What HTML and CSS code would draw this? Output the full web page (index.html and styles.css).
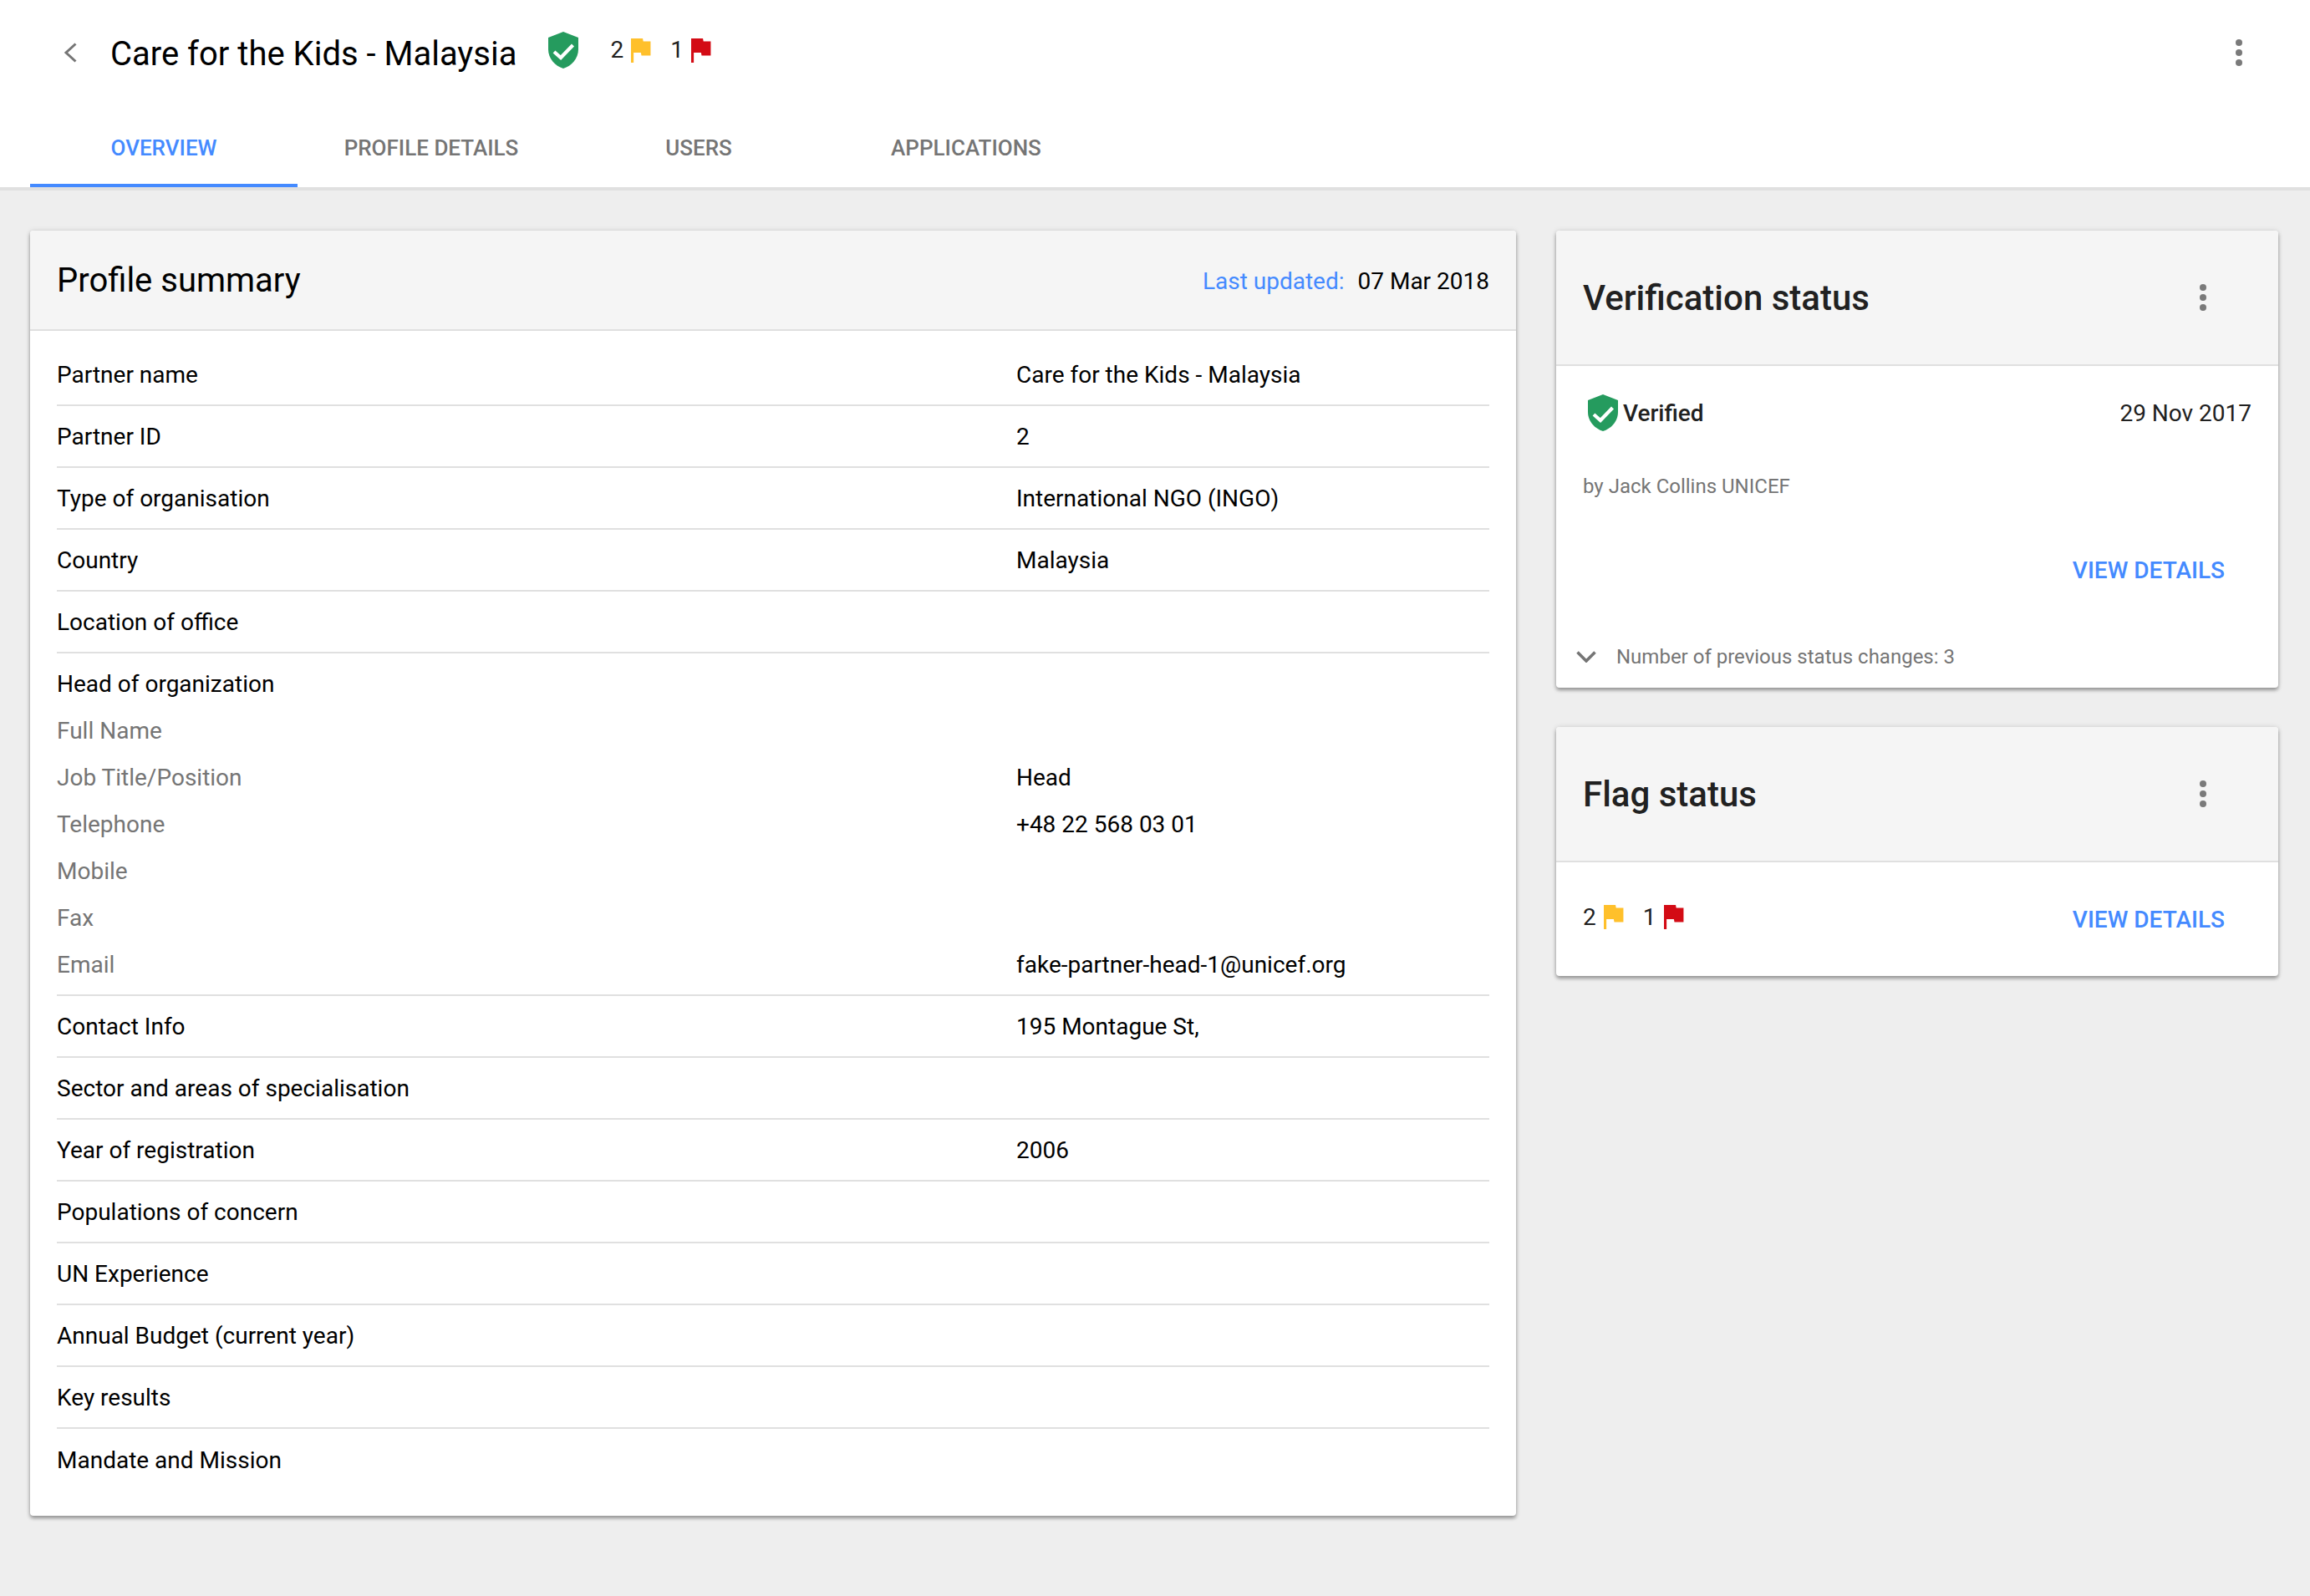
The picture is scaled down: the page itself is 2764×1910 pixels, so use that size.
FILE: index.html
```html
<!DOCTYPE html>
<html lang="en">
  <head>
    <meta charset="UTF-8" />
    <title>Care for the Kids - Malaysia</title>
    <link rel="stylesheet" href="styles.css">
  </head>
  <body>
    <svg class="defs" width="0" height="0">
      <symbol id="shield" viewBox="0 0 36 44">
        <path d="M18 0L36 7V21C36 32 28 41 18 44C8 41 0 32 0 21V7Z" fill="#259b5e"/>
        <path d="M7 24L15 31L29.500 16" fill="none" stroke="#fff" stroke-width="4.200"/>
      </symbol>
      <symbol id="flag" viewBox="5 4 16 17" preserveAspectRatio="none">
        <path d="M14.400 6L14 4H5v17h2v-7h5.600l.4 2h7V6z"/>
      </symbol>
      <symbol id="kebab" viewBox="0 0 8 32">
        <circle cx="4" cy="4" r="4"/><circle cx="4" cy="16" r="4"/><circle cx="4" cy="28" r="4"/>
      </symbol>
    </svg>

    <header class="page-header">
      <div class="toolbar">
        <svg class="back" viewBox="0 0 16 24"><path d="M14.500 1.500L3 12L14.500 22.500" fill="none" stroke="#757575" stroke-width="3"/></svg>
        <h1 class="page-title">Care for the Kids - Malaysia</h1>
        <svg class="shield-lg"><use href="#shield"/></svg>
        <div class="flags flags-top">
          <span class="flag-count">2</span><svg class="flag flag-yellow"><use href="#flag"/></svg>
          <span class="flag-count">1</span><svg class="flag flag-red"><use href="#flag"/></svg>
        </div>
        <svg class="kebab kebab-top"><use href="#kebab"/></svg>
      </div>
      <nav class="tabs">
        <a class="tab active">OVERVIEW</a>
        <a class="tab">PROFILE DETAILS</a>
        <a class="tab">USERS</a>
        <a class="tab">APPLICATIONS</a>
      </nav>
    </header>

    <main class="content">
      <section class="card summary">
        <div class="summary-head">
          <h2 class="summary-title">Profile summary</h2>
          <div class="updated"><span class="updated-label">Last updated:</span><span>07 Mar 2018</span></div>
        </div>
        <div class="summary-body">
          <div class="row"><span class="label">Partner name</span><span class="value">Care for the Kids - Malaysia</span></div>
          <div class="row"><span class="label">Partner ID</span><span class="value">2</span></div>
          <div class="row"><span class="label">Type of organisation</span><span class="value">International NGO (INGO)</span></div>
          <div class="row"><span class="label">Country</span><span class="value">Malaysia</span></div>
          <div class="row"><span class="label">Location of office</span></div>
          <div class="group">
            <div class="subrow"><span class="label">Head of organization</span></div>
            <div class="subrow"><span class="label muted">Full Name</span></div>
            <div class="subrow"><span class="label muted">Job Title/Position</span><span class="value">Head</span></div>
            <div class="subrow"><span class="label muted">Telephone</span><span class="value">+48 22 568 03 01</span></div>
            <div class="subrow"><span class="label muted">Mobile</span></div>
            <div class="subrow"><span class="label muted">Fax</span></div>
            <div class="subrow"><span class="label muted">Email</span><span class="value">fake-partner-head-1@unicef.org</span></div>
          </div>
          <div class="row"><span class="label">Contact Info</span><span class="value">195 Montague St,</span></div>
          <div class="row"><span class="label">Sector and areas of specialisation</span></div>
          <div class="row"><span class="label">Year of registration</span><span class="value">2006</span></div>
          <div class="row"><span class="label">Populations of concern</span></div>
          <div class="row"><span class="label">UN Experience</span></div>
          <div class="row"><span class="label">Annual Budget (current year)</span></div>
          <div class="row"><span class="label">Key results</span></div>
          <div class="row last"><span class="label">Mandate and Mission</span></div>
        </div>
      </section>

      <aside class="side">
        <section class="card">
          <div class="side-head">
            <h2 class="side-title">Verification status</h2>
            <svg class="kebab"><use href="#kebab"/></svg>
          </div>
          <div class="verify">
            <div class="verify-top">
              <div class="verified"><svg class="shield-sm"><use href="#shield"/></svg><span>Verified</span></div>
              <span>29 Nov 2017</span>
            </div>
            <div class="verify-by">by Jack Collins UNICEF</div>
            <div class="verify-action"><a class="link">VIEW DETAILS</a></div>
            <div class="history">
              <svg class="chevron" viewBox="0 0 24 14"><path d="M1.500 1.500L12 12L22.500 1.500" fill="none" stroke="#757575" stroke-width="3.600"/></svg>
              <span>Number of previous status changes: 3</span>
            </div>
          </div>
        </section>
        <section class="card">
          <div class="side-head">
            <h2 class="side-title">Flag status</h2>
            <svg class="kebab"><use href="#kebab"/></svg>
          </div>
          <div class="flag-body">
            <div class="flags flags-side">
              <span class="flag-count">2</span><svg class="flag flag-yellow"><use href="#flag"/></svg>
              <span class="flag-count">1</span><svg class="flag flag-red"><use href="#flag"/></svg>
            </div>
            <a class="link">VIEW DETAILS</a>
          </div>
        </section>
      </aside>
    </main>
  </body>
</html>
```

FILE: styles.css
```css
* {
  box-sizing: border-box;
}
body {
  margin: 0;
  background-color: #eeeeee;
  color: #000;
  font-family: Roboto, "Liberation Sans", sans-serif;
  font-size: 28px;
}
h1, h2 {
  margin: 0;
  font-weight: 400;
}
.defs {
  position: absolute;
}

/* page header */
.page-header {
  height: 228px;
  background: #fff;
  border-bottom: 4px solid #e0e0e0;
}
.toolbar {
  display: flex;
  align-items: center;
  height: 128px;
  padding: 0 80px 4px 76px;
}
.back {
  width: 16px;
  height: 24px;
  margin-top: 2px;
  margin-right: 40px;
}
.page-title {
  margin-top: 4px;
  font-size: 40px;
  color: #000;
}
.shield-lg {
  width: 36px;
  height: 44px;
  margin-left: 38px;
  margin-bottom: 4px;
}
.flags {
  display: flex;
  align-items: center;
  color: #212121;
}
.flags-top {
  margin-left: 38px;
  margin-bottom: 4px;
}
.flags-side {
  margin-bottom: 5px;
}
.flag-count {
  line-height: 30px;
}
.flag {
  width: 25px;
  height: 29px;
  margin-left: 9px;
  margin-right: 22px;
}
.flag-yellow {
  fill: #ffc02b;
}
.flag-red {
  fill: #d30b15;
}
.kebab {
  width: 10px;
  height: 32px;
  fill: #7a7a7a;
}
.kebab-top {
  margin-top: 2px;
  margin-left: auto;
}
.tabs {
  display: flex;
  padding-left: 36px;
}
.tab {
  display: flex;
  align-items: center;
  justify-content: center;
  width: 320px;
  height: 96px;
  padding-top: 5px;
  border-bottom: 4px solid transparent;
  color: #757575;
  font-size: 26px;
  font-weight: 500;
}
.tab.active {
  color: #448aff;
  border-bottom-color: #448aff;
}

/* layout */
.content {
  display: flex;
  align-items: flex-start;
  gap: 48px;
  padding: 48px 36px;
}
.card {
  background: #fff;
  border-radius: 4px;
  box-shadow: 0 3px 4px rgba(0, 0, 0, 0.35), 0 0 6px rgba(0, 0, 0, 0.12);
  overflow: hidden;
}
.summary {
  flex: 0 0 1778px;
}
.side {
  flex: 0 0 864px;
  display: flex;
  flex-direction: column;
  gap: 47px;
  color: #212121;
}

/* profile summary */
.summary-head {
  display: flex;
  align-items: center;
  justify-content: space-between;
  height: 120px;
  padding: 0 32px;
  background: #f5f5f5;
  border-bottom: 2px solid #e0e0e0;
}
.summary-title {
  font-size: 40px;
  color: #000;
}
.updated {
  display: flex;
  gap: 16px;
  padding-top: 2px;
}
.updated-label {
  color: #448aff;
}
.summary-body {
  padding: 16px 32px 30px;
}
.row, .group {
  border-bottom: 2px solid #e0e0e0;
}
.row {
  display: flex;
  align-items: center;
  height: 74px;
}
.row.last {
  border-bottom: 0;
}
.group {
  padding: 8px 0;
}
.subrow {
  display: flex;
  align-items: center;
  height: 56px;
}
.label {
  flex: 0 0 1148px;
}
.muted {
  color: #757575;
}

/* side cards */
.side-head {
  display: flex;
  align-items: center;
  justify-content: space-between;
  height: 162px;
  padding: 0 85px 0 32px;
  background: #f5f5f5;
  border-bottom: 2px solid #e0e0e0;
}
.side-title {
  font-size: 42px;
  font-weight: 500;
}
.verify {
  height: 385px;
  padding: 33px 32px 0;
}
.verify-top {
  display: flex;
  align-items: center;
  justify-content: space-between;
  height: 46px;
}
.verified {
  display: flex;
  align-items: center;
  font-weight: 500;
}
.shield-sm {
  width: 36px;
  height: 44px;
  margin-left: 6px;
  margin-right: 6px;
}
.verify-by {
  margin-top: 51px;
  color: #757575;
  font-size: 24px;
}
.verify-action {
  display: flex;
  justify-content: flex-end;
  margin-top: 70px;
  padding-right: 32px;
}
.link {
  color: #448aff;
  font-weight: 500;
}
.history {
  display: flex;
  align-items: center;
  margin: 73px 0 0 -8px;
  color: #757575;
  font-size: 24px;
}
.chevron {
  width: 24px;
  height: 14px;
  margin-right: 24px;
}
.flag-body {
  display: flex;
  align-items: center;
  justify-content: space-between;
  height: 136px;
  padding: 0 64px 0 32px;
}
```
